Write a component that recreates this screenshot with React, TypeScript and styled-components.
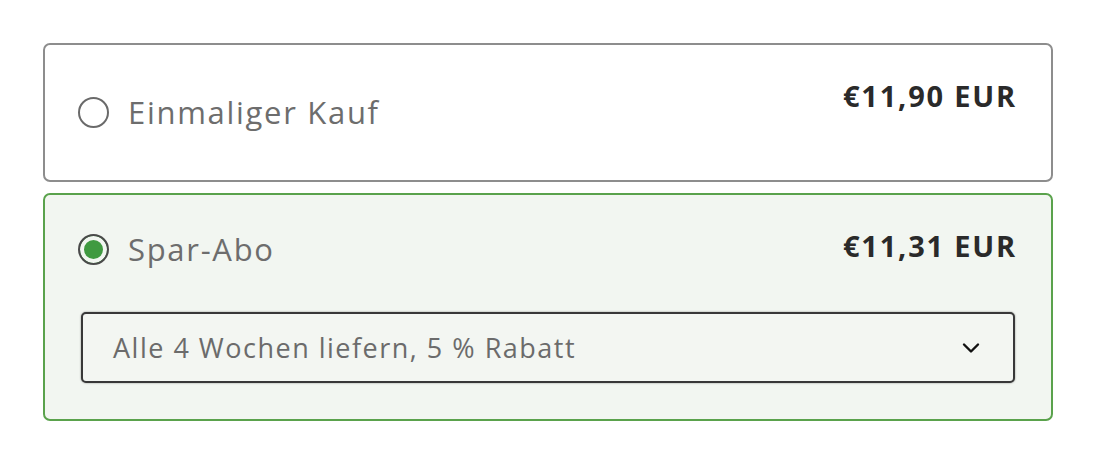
import React from 'react';
import styled, { createGlobalStyle } from 'styled-components';

const GlobalStyle = createGlobalStyle`
  body {
    margin: 0;
    background: #ffffff;
    font-family: 'Open Sans', 'Liberation Sans', sans-serif;
  }
`;

const App = () => {
  return (
    <Page>
      <GlobalStyle />
      <Card>
        <Header>
          <Option $height={66}>
            <Radio />
            <Label>Einmaliger Kauf</Label>
          </Option>
          <Price>€11,90 EUR</Price>
        </Header>
      </Card>

      <Card $active>
        <Header>
          <Option $height={40}>
            <Radio $checked />
            <Label>Spar-Abo</Label>
          </Option>
          <Price>€11,31 EUR</Price>
        </Header>
        <SelectBox>
          <SelectText>Alle 4 Wochen liefern, 5 % Rabatt</SelectText>
          <svg width="18" height="12" viewBox="0 0 18 12">
            <path d="M2 2.5 L9 9.5 L16 2.5" fill="none" stroke="#111" strokeWidth="2.4" strokeLinecap="round" strokeLinejoin="round" />
          </svg>
        </SelectBox>
      </Card>
    </Page>
  );
};

export default App;

/* Styled Components */
const Page = styled.div`
  width: 1010px;
  padding: 43px 0 0 43px;
  display: flex;
  flex-direction: column;
  gap: 11px;
`;

const Card = styled.div<{ $active?: boolean }>`
  box-sizing: border-box;
  border: 2px solid ${(p) => (p.$active ? '#5aa24c' : '#8d8d8d')};
  border-radius: 7px;
  background: ${(p) => (p.$active ? '#f2f6f1' : '#ffffff')};
  padding: 34px 36px ${(p) => (p.$active ? '36px' : '35px')} 33px;
`;

const Header = styled.div`
  display: flex;
  justify-content: space-between;
  align-items: flex-start;
`;

const Option = styled.div<{ $height: number }>`
  display: flex;
  align-items: center;
  gap: 19px;
  height: ${(p) => p.$height}px;
`;

const Radio = styled.span<{ $checked?: boolean }>`
  box-sizing: border-box;
  width: 31px;
  height: 31px;
  border-radius: 50%;
  border: 2px solid ${(p) => (p.$checked ? '#4a4a4a' : '#6a6a6a')};
  background: ${(p) => (p.$checked ? '#3f9a40' : 'transparent')};
  box-shadow: ${(p) => (p.$checked ? 'inset 0 0 0 4px #f2f6f1' : 'none')};
  flex-shrink: 0;
`;

const Label = styled.span`
  font-size: 31px;
  color: #6d6d6d;
  letter-spacing: 1.7px;
  line-height: 40px;
`;

const Price = styled.span`
  margin: -3px -2px 0 0;
  font-size: 29px;
  font-weight: 700;
  color: #2a2a2a;
  letter-spacing: 1.8px;
  line-height: 40px;
`;

const SelectBox = styled.div`
  box-sizing: border-box;
  margin: 43px 0 0 3px;
  height: 71px;
  display: flex;
  align-items: center;
  justify-content: space-between;
  padding: 0 33px 0 30px;
  border: 2px solid #383838;
  border-radius: 5px;
  box-shadow: 0 0 2px rgba(0, 0, 0, 0.45);
  background: #f3f6f2;
`;

const SelectText = styled.span`
  font-size: 27px;
  color: #6b6b6b;
  letter-spacing: 1.5px;
`;
